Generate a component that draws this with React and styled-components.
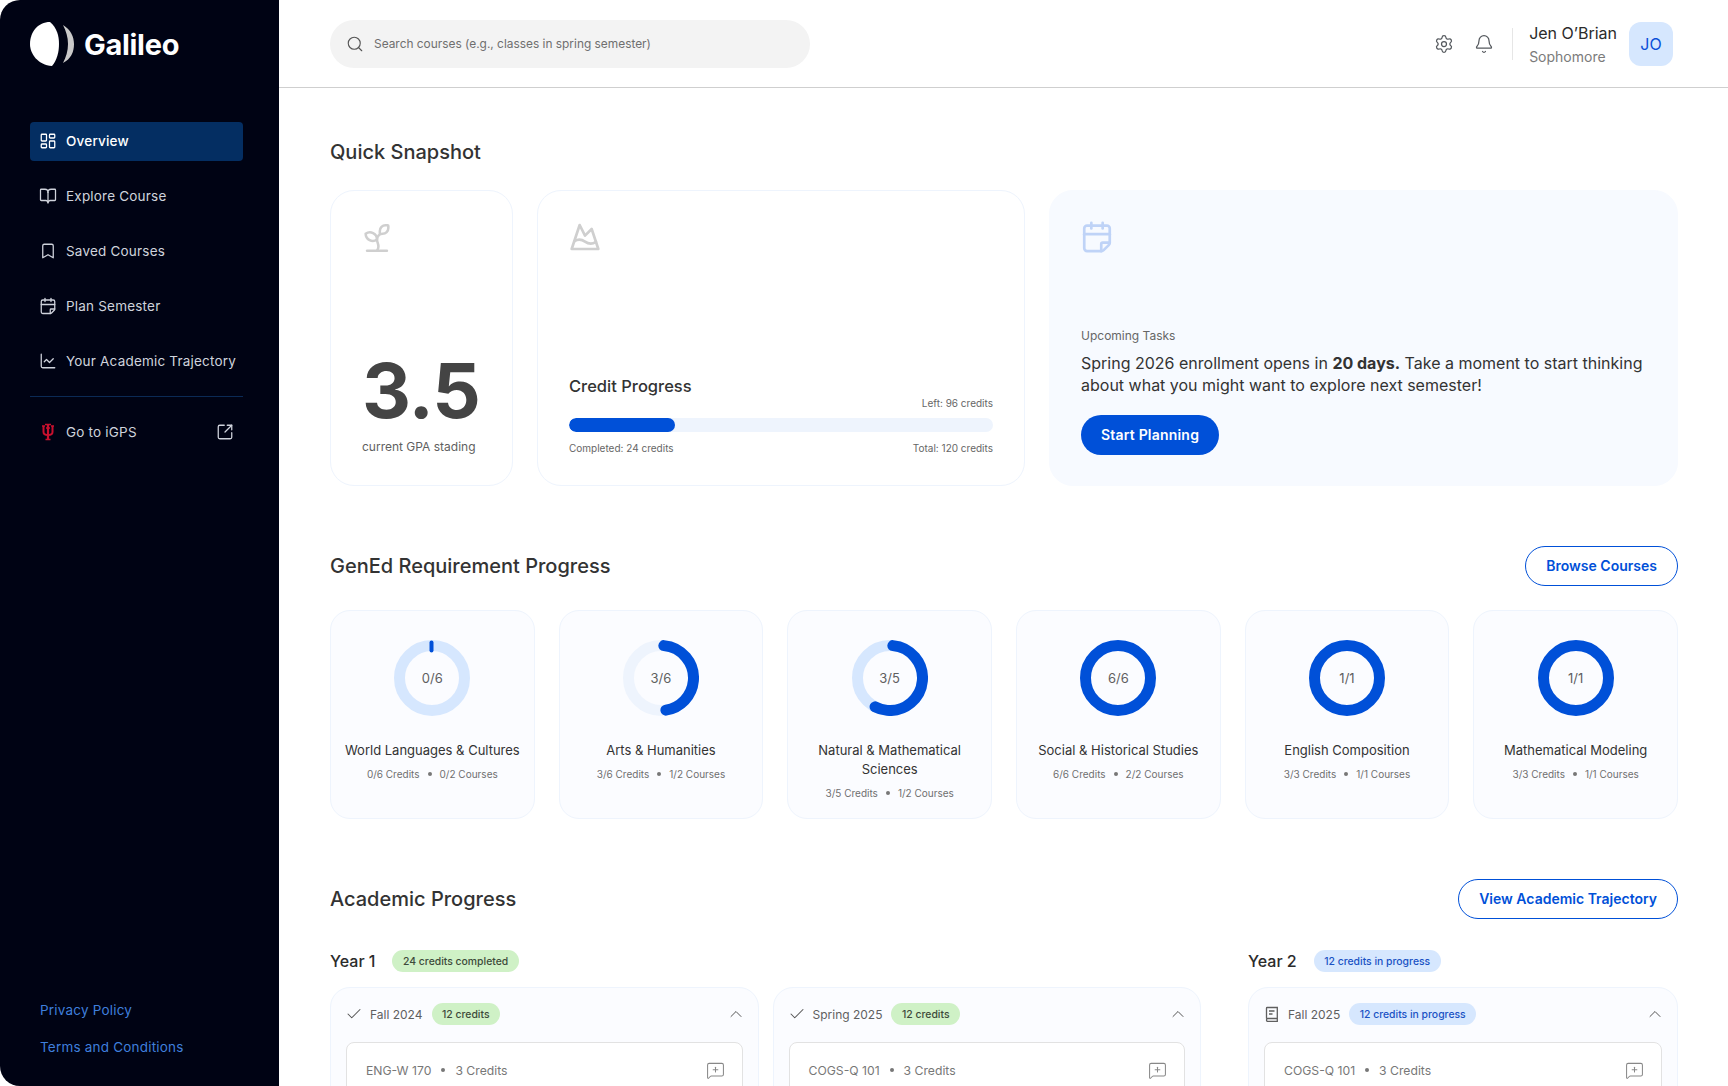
import React from "react";
import styled, { createGlobalStyle } from "styled-components";
import {
  Bell,
  Bookmark,
  BookOpen,
  CalendarFold,
  ChartLine,
  Check,
  ChevronUp,
  LayoutDashboard,
  MessageSquarePlus,
  MountainSnow,
  Search,
  Settings,
  Sprout,
  SquareArrowOutUpRight,
} from "lucide-react";

const navItems = [
  { label: "Overview", icon: LayoutDashboard, active: true },
  { label: "Explore Course", icon: BookOpen },
  { label: "Saved Courses", icon: Bookmark },
  { label: "Plan Semester", icon: CalendarFold },
  { label: "Your Academic Trajectory", icon: ChartLine },
];

const genEds = [
  { name: "World Languages & Cultures", ring: "0/6", frac: 0, credits: "0/6 Credits", courses: "0/2 Courses", track: "#d6e7fe" },
  { name: "Arts & Humanities", ring: "3/6", frac: 0.5, credits: "3/6 Credits", courses: "1/2 Courses", track: "#eef4fd" },
  { name: "Natural & Mathematical Sciences", ring: "3/5", frac: 0.6, credits: "3/5 Credits", courses: "1/2 Courses", track: "#d6e7fe" },
  { name: "Social & Historical Studies", ring: "6/6", frac: 1, credits: "6/6 Credits", courses: "2/2 Courses", track: "#d6e7fe" },
  { name: "English Composition", ring: "1/1", frac: 1, credits: "3/3 Credits", courses: "1/1 Courses", track: "#d6e7fe" },
  { name: "Mathematical Modeling", ring: "1/1", frac: 1, credits: "3/3 Credits", courses: "1/1 Courses", track: "#d6e7fe" },
];

const GlobalStyle = createGlobalStyle`
  html, body {
    margin: 0;
    padding: 0;
    background: #fff;
    font-family: Inter, "Liberation Sans", sans-serif;
    color: #2b2b2b;
  }
  * { box-sizing: border-box; }
`;

const Shell = styled.div`
  display: flex;
  height: 1086px;
  overflow: hidden;
  border-radius: 20px;
  background: #fff;
`;

const Sidebar = styled.aside`
  width: 279px;
  flex-shrink: 0;
  background: #000314;
  padding: 22px 36px 30px 30px;
  display: flex;
  flex-direction: column;
`;

const Brand = styled.div`
  display: flex;
  align-items: center;
  gap: 10px;
  height: 44px;
  margin-bottom: 56px;
  color: #fff;
  font-size: 29px;
  font-weight: 700;
  letter-spacing: -0.3px;
`;

const Nav = styled.nav`
  display: flex;
  flex-direction: column;
  gap: 16px;
`;

const NavItem = styled.a`
  display: flex;
  align-items: center;
  gap: 9px;
  height: 39px;
  padding: 0 9px 2px;
  border-radius: 4px;
  font-size: 13.5px;
  letter-spacing: 0.2px;
  white-space: nowrap;
  font-weight: ${(p) => (p.$active ? 500 : 400)};
  color: ${(p) => (p.$active ? "#fff" : "#cfd3dc")};
  background: ${(p) => (p.$active ? "#042e62" : "transparent")};
  svg {
    flex-shrink: 0;
  }
`;

const NavDivider = styled.div`
  height: 1px;
  background: #0b2a55;
  margin: 15px 0 16px;
`;

const ExternalRow = styled(NavItem)`
  span {
    flex: 1;
  }
`;

const FooterLinks = styled.div`
  margin-top: auto;
  display: flex;
  flex-direction: column;
  gap: 20px;
  padding-left: 10px;
`;

const FooterLink = styled.a`
  font-size: 13.5px;
  line-height: 17px;
  letter-spacing: 0.2px;
  color: #3f7fdc;
`;

const Main = styled.main`
  flex: 1;
  min-width: 0;
  display: flex;
  flex-direction: column;
`;

const Header = styled.header`
  height: 88px;
  flex-shrink: 0;
  display: flex;
  align-items: center;
  justify-content: space-between;
  padding: 0 55px 0 51px;
  border-bottom: 1px solid #cfcfcf;
`;

const SearchBox = styled.div`
  width: 480px;
  height: 48px;
  border-radius: 24px;
  background: #f3f3f3;
  display: flex;
  align-items: center;
  gap: 10px;
  padding: 0 16px;
  color: #6f6f6f;
  font-size: 11.9px;
`;

const HeaderRight = styled.div`
  display: flex;
  align-items: center;
`;

const HeaderIcon = styled.span`
  display: flex;
  color: #55595e;
  margin-left: 20px;
`;

const HeaderDivider = styled.div`
  width: 1px;
  height: 32px;
  background: #e6e6e6;
  margin: 0 16px 0 18px;
`;

const UserInfo = styled.div`
  display: flex;
  flex-direction: column;
  gap: 5px;
  margin-top: 1px;
  margin-right: 12px;
`;

const UserName = styled.div`
  font-size: 16px;
  line-height: 19px;
  color: #2b2b2b;
`;

const UserRole = styled.div`
  font-size: 14px;
  line-height: 17px;
  color: #7b7b7b;
`;

const Avatar = styled.div`
  width: 44px;
  height: 44px;
  border-radius: 12px;
  background: #d6e7fe;
  color: #0a50d8;
  font-size: 16px;
  display: flex;
  align-items: center;
  justify-content: center;
`;

const Content = styled.div`
  flex: 1;
  min-height: 0;
  overflow: hidden;
  padding: 50px 50px 0 51px;
`;

const SectionTitle = styled.h2`
  margin: 0;
  font-size: 20px;
  line-height: 28px;
  font-weight: 500;
  color: #333;
`;

const Snapshot = styled.div`
  display: grid;
  grid-template-columns: 183px 488px 1fr;
  gap: 24px;
  height: 296px;
  margin-top: 24px;
`;

const Card = styled.div`
  border-radius: 24px;
  border: 1px solid ${(p) => (p.$tint ? "#f7faff" : "#eef4fd")};
  background: ${(p) => (p.$tint ? "#f7faff" : "#fff")};
  padding: 30px 31px;
  display: flex;
  flex-direction: column;
`;

const Spacer = styled.div`
  flex: 1;
`;

const SproutIcon = styled(Sprout)`
  margin-left: -2px;
`;

const TaskIcon = styled(CalendarFold)`
  margin: -1px 0 0 -1px;
`;

const GpaValue = styled.div`
  font-size: 76px;
  line-height: 72px;
  font-weight: 700;
  letter-spacing: -1px;
  color: #444;
`;

const GpaLabel = styled.div`
  margin-top: 13px;
  font-size: 12px;
  line-height: 16px;
  white-space: nowrap;
  color: #5f5f5f;
`;

const CardTitle = styled.div`
  font-size: 16.5px;
  line-height: 20px;
  font-weight: 500;
  color: #333;
`;

const SmallRow = styled.div`
  display: flex;
  justify-content: ${(p) => p.$align || "space-between"};
  font-size: 10px;
  line-height: 14px;
  color: #666;
`;

const Track = styled.div`
  height: 14px;
  border-radius: 7px;
  background: #eef4fd;
  margin: 8px 0 9px;
  overflow: hidden;
`;

const Fill = styled.div`
  height: 100%;
  border-radius: 7px;
  background: #0050d8;
`;

const TaskLabel = styled.div`
  font-size: 12px;
  line-height: 16px;
  color: #666;
`;

const TaskText = styled.p`
  margin: 8px 0 19px;
  font-size: 16px;
  line-height: 22px;
  color: #333;
  b {
    font-weight: 700;
  }
`;

const PrimaryButton = styled.button`
  align-self: flex-start;
  height: 40px;
  padding: 0 20px 2px;
  border: 0;
  border-radius: 20px;
  background: #0050d8;
  color: #fff;
  font: 600 14px Inter, sans-serif;
  letter-spacing: 0.2px;
`;

const OutlineButton = styled.button`
  height: 40px;
  padding: 0 20px 2px;
  border: 1px solid #0050d8;
  border-radius: 20px;
  background: #fff;
  color: #0050d8;
  font: 600 14px Inter, sans-serif;
`;

const SectionHead = styled.div`
  display: flex;
  align-items: center;
  justify-content: space-between;
  height: 40px;
  margin-top: ${(p) => p.$top}px;
`;

const GenEdGrid = styled.div`
  display: grid;
  grid-template-columns: repeat(6, 1fr);
  gap: 24px;
  margin-top: 24px;
`;

const GenEdCard = styled.div`
  height: 209px;
  border-radius: 20px;
  border: 1px solid #eef4fd;
  background: #fbfcff;
  padding: 29px 8px 0;
  display: flex;
  flex-direction: column;
  align-items: center;
  text-align: center;
`;

const RingWrap = styled.div`
  position: relative;
  width: 76px;
  height: 76px;
  margin-bottom: 25px;
`;

const RingText = styled.div`
  position: absolute;
  inset: 0;
  display: flex;
  align-items: center;
  justify-content: center;
  font-size: 13px;
  color: #5f5f5f;
`;

const GenEdName = styled.div`
  font-size: 13px;
  line-height: 19px;
  color: #333;
`;

const Stats = styled.div`
  display: flex;
  align-items: center;
  gap: 8px;
  margin-top: 7px;
  font-size: 10px;
  line-height: 14px;
  color: #6f6f6f;
`;

const Dot = styled.i`
  width: 4px;
  height: 4px;
  border-radius: 50%;
  background: #777;
`;

const YearGrid = styled.div`
  display: grid;
  grid-template-columns: 871px 1fr;
  gap: 47px;
  margin-top: 31px;
`;

const YearHead = styled.div`
  display: flex;
  align-items: center;
  gap: 17px;
  height: 22px;
  font-size: 16px;
  font-weight: 500;
  color: #2b2b2b;
`;

const Pill = styled.span`
  height: 22px;
  padding: 0 10.5px;
  border-radius: 11px;
  display: inline-flex;
  align-items: center;
  font-size: 10.4px;
  font-weight: 500;
  white-space: nowrap;
  background: ${(p) => (p.$green ? "#cff1c6" : "#d6e7fe")};
  color: ${(p) => (p.$green ? "#3d4a3a" : "#1a52c4")};
`;

const SemesterRow = styled.div`
  display: grid;
  grid-template-columns: repeat(${(p) => p.$cols}, 1fr);
  gap: 14px;
  margin-top: 15px;
`;

const Semester = styled.div`
  border-radius: 20px;
  border: 1px solid #eef4fd;
  background: #fbfcff;
  padding: 14px 15px 16px;
  height: 200px;
`;

const SemesterHead = styled.div`
  display: flex;
  align-items: center;
  gap: 8px;
  height: 24px;
  font-size: 12px;
  color: #5f5f5f;
  svg:first-child {
    margin: 0 -1px;
  }
  svg:last-child {
    margin: 0 -3px 0 auto;
  }
  span + span {
    margin-left: 1px;
  }
`;

const CourseCard = styled.div`
  display: flex;
  align-items: center;
  gap: 10px;
  height: 60px;
  margin-top: 16px;
  padding: 0 17px 4px 19px;
  background: #fff;
  border: 1px solid #e2e2e2;
  border-radius: 8px;
  font-size: 12.2px;
  color: #777;
  svg {
    margin-left: auto;
  }
`;

const GalileoLogo = () => (
  <svg width="44" height="44" viewBox="0 0 44 44">
    <path fill="#fff" d="M20 0C8 0 0 10 0 22c0 10 8 21 22 22 5-6 7-14 7-22S27 6 20 0Z" />
    <path fill="#c9c9c9" d="M33 3c8 5 11 12 11 19 0 8-3 15-11 19 3-6 5-12 5-19S36 9 33 3Z" />
  </svg>
);

const TridentIcon = () => (
  <svg width="18" height="18" viewBox="0 0 18 18" fill="none" stroke="#c8102e">
    <path strokeWidth="1.5" d="M6 1.5h6M7 5h4M6.5 16.5h5" />
    <path strokeWidth="2.2" d="M9 1.5v15" />
    <path strokeWidth="2" d="M4.5 3v6c0 2 2 3 4.5 3s4.5-1 4.5-3V3" />
    <path strokeWidth="1.4" d="M3 3h3M12 3h3" />
  </svg>
);

const BookIcon = () => (
  <svg width="18" height="16" viewBox="0 0 16 16" fill="none" stroke="#5f5f5f" strokeWidth="1.3">
    <path d="M2.5 12.5V2.2c0-.4.3-.7.7-.7h10.1v13.9H3.6c-.6 0-1.1-.5-1.1-1.4 0-.9.5-1.5 1.1-1.5h9.7" />
    <path d="M5 5h5.5M5 8h3.5" />
  </svg>
);

const Ring = ({ frac, track, label }) => {
  const r = 32.5;
  const circ = 2 * Math.PI * r;
  const full = frac >= 1;
  const arc = ((frac * 360 - 14) / 360) * circ;
  return (
    <RingWrap>
      <svg width="76" height="76" viewBox="0 0 76 76" fill="none">
        <circle cx="38" cy="38" r={r} stroke={full ? "#0050d8" : track} strokeWidth={11} />
        {frac === 0 && <path d="M37.5 2.5v8" stroke="#0050d8" strokeWidth="4" strokeLinecap="round" />}
        {frac > 0 && !full && (
          <circle
            cx="38"
            cy="38"
            r={r}
            stroke="#0050d8"
            strokeWidth="11"
            strokeLinecap="round"
            strokeDasharray={`${arc} ${circ}`}
            transform="rotate(-85 38 38)"
          />
        )}
      </svg>
      <RingText>{label}</RingText>
    </RingWrap>
  );
};

const SemesterCard = ({ icon, title, pill, green, course }) => (
  <Semester>
    <SemesterHead>
      {icon}
      <span>{title}</span>
      <Pill $green={green}>{pill}</Pill>
      <ChevronUp size={20} strokeWidth={1.2} color="#555" />
    </SemesterHead>
    <CourseCard>
      <span>{course}</span>
      <Dot />
      <span>3 Credits</span>
      <MessageSquarePlus size={19} strokeWidth={1.3} color="#888" />
    </CourseCard>
  </Semester>
);

const App = () => {
  return (
    <>
      <GlobalStyle />
      <Shell>
        <Sidebar>
          <Brand>
            <GalileoLogo />
            Galileo
          </Brand>
          <Nav>
            {navItems.map(({ label, icon: Icon, active }) => (
              <NavItem key={label} $active={active}>
                <Icon size={18} strokeWidth={1.7} />
                {label}
              </NavItem>
            ))}
          </Nav>
          <NavDivider />
          <ExternalRow>
            <TridentIcon />
            <span>Go to iGPS</span>
            <SquareArrowOutUpRight size={18} strokeWidth={1.7} />
          </ExternalRow>
          <FooterLinks>
            <FooterLink>Privacy Policy</FooterLink>
            <FooterLink>Terms and Conditions</FooterLink>
          </FooterLinks>
        </Sidebar>
        <Main>
          <Header>
            <SearchBox>
              <Search size={18} strokeWidth={1.5} color="#555" />
              Search courses (e.g., classes in spring semester)
            </SearchBox>
            <HeaderRight>
              <HeaderIcon>
                <Settings size={20} strokeWidth={1.5} />
              </HeaderIcon>
              <HeaderIcon>
                <Bell size={20} strokeWidth={1.5} />
              </HeaderIcon>
              <HeaderDivider />
              <UserInfo>
                <UserName>Jen O’Brian</UserName>
                <UserRole>Sophomore</UserRole>
              </UserInfo>
              <Avatar>JO</Avatar>
            </HeaderRight>
          </Header>
          <Content>
            <SectionTitle>Quick Snapshot</SectionTitle>
            <Snapshot>
              <Card>
                <SproutIcon size={34} strokeWidth={1.8} color="#cfcfcf" />
                <Spacer />
                <GpaValue>3.5</GpaValue>
                <GpaLabel>current GPA stading</GpaLabel>
              </Card>
              <Card>
                <MountainSnow size={32} strokeWidth={2} color="#cfcfcf" />
                <Spacer />
                <CardTitle>Credit Progress</CardTitle>
                <SmallRow $align="flex-end">Left: 96 credits</SmallRow>
                <Track>
                  <Fill style={{ width: `${(24 / 96) * 100}%` }} />
                </Track>
                <SmallRow>
                  <span>Completed: 24 credits</span>
                  <span>Total: 120 credits</span>
                </SmallRow>
              </Card>
              <Card $tint>
                <TaskIcon size={34} strokeWidth={1.9} color="#bfd3f7" />
                <Spacer />
                <TaskLabel>Upcoming Tasks</TaskLabel>
                <TaskText>
                  Spring 2026 enrollment opens in <b>20 days.</b> Take a moment to start thinking about what you might
                  want to explore next semester!
                </TaskText>
                <PrimaryButton>Start Planning</PrimaryButton>
              </Card>
            </Snapshot>

            <SectionHead $top={60}>
              <SectionTitle>GenEd Requirement Progress</SectionTitle>
              <OutlineButton>Browse Courses</OutlineButton>
            </SectionHead>
            <GenEdGrid>
              {genEds.map((g) => (
                <GenEdCard key={g.name}>
                  <Ring frac={g.frac} track={g.track} label={g.ring} />
                  <GenEdName>{g.name}</GenEdName>
                  <Stats>
                    <span>{g.credits}</span>
                    <Dot />
                    <span>{g.courses}</span>
                  </Stats>
                </GenEdCard>
              ))}
            </GenEdGrid>

            <SectionHead $top={60}>
              <SectionTitle>Academic Progress</SectionTitle>
              <OutlineButton>View Academic Trajectory</OutlineButton>
            </SectionHead>
            <YearGrid>
              <div>
                <YearHead>
                  Year 1 <Pill $green>24 credits completed</Pill>
                </YearHead>
                <SemesterRow $cols={2}>
                  <SemesterCard
                    icon={<Check size={18} strokeWidth={1.4} color="#555" />}
                    title="Fall 2024"
                    pill="12 credits"
                    green
                    course="ENG-W 170"
                  />
                  <SemesterCard
                    icon={<Check size={18} strokeWidth={1.4} color="#555" />}
                    title="Spring 2025"
                    pill="12 credits"
                    green
                    course="COGS-Q 101"
                  />
                </SemesterRow>
              </div>
              <div>
                <YearHead>
                  Year 2 <Pill>12 credits in progress</Pill>
                </YearHead>
                <SemesterRow $cols={1}>
                  <SemesterCard icon={<BookIcon />} title="Fall 2025" pill="12 credits in progress" course="COGS-Q 101" />
                </SemesterRow>
              </div>
            </YearGrid>
          </Content>
        </Main>
      </Shell>
    </>
  );
};

export default App;
